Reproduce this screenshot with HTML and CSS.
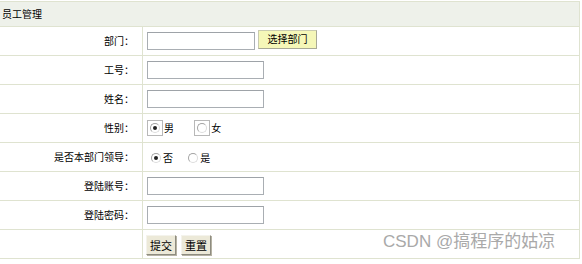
FILE: index.html
```html
<!DOCTYPE html>
<html lang="zh-CN">
<head>
<meta charset="utf-8">
<title>员工管理</title>
<link rel="stylesheet" href="styles.css">
</head>
<body>
<table class="form-table">
  <tr><td class="head" colspan="2">员工管理</td></tr>
  <tr>
    <td class="label">部门：</td>
    <td class="field"><input class="text short" type="text"><button class="pick" type="button">选择部门</button></td>
  </tr>
  <tr>
    <td class="label">工号：</td>
    <td class="field"><input class="text" type="text"></td>
  </tr>
  <tr>
    <td class="label">姓名：</td>
    <td class="field"><input class="text" type="text"></td>
  </tr>
  <tr>
    <td class="label">性别：</td>
    <td class="field">
      <span class="boxed"><input class="radio" type="radio" name="sex" checked></span><span class="opt">男</span>
      <span class="boxed second"><input class="radio" type="radio" name="sex"></span><span class="opt">女</span>
    </td>
  </tr>
  <tr>
    <td class="label">是否本部门领导：</td>
    <td class="field">
      <span class="plain"><input class="radio" type="radio" name="lead" checked><span class="opt">否</span></span>
      <span class="plain second2"><input class="radio" type="radio" name="lead"><span class="opt">是</span></span>
    </td>
  </tr>
  <tr>
    <td class="label">登陆账号：</td>
    <td class="field"><input class="text" type="text"></td>
  </tr>
  <tr>
    <td class="label">登陆密码：</td>
    <td class="field"><input class="text" type="password"></td>
  </tr>
  <tr>
    <td class="label"></td>
    <td class="field"><button class="act" type="button">提交</button><button class="act" type="button">重置</button></td>
  </tr>
</table>
<div class="watermark">CSDN @搞程序的姑凉</div>
</body>
</html>
```
FILE: styles.css
```css
html, body {
  margin: 0;
  padding: 0;
  background: #ffffff;
}
body {
  font-family: "Noto Sans CJK SC", "Liberation Sans", sans-serif;
  font-size: 10px;
  color: #000;
  position: relative;
  width: 582px;
  height: 264px;
  overflow: hidden;
}
.form-table {
  margin: 1px 0 0 -1px;
  width: 581px;
  border-collapse: separate;
  border-spacing: 1px;
  background: #dfe3d0;
}
.form-table td {
  background: #fff;
  height: 28px;
  padding: 0;
  vertical-align: middle;
  line-height: 12px;
}
.form-table td.head {
  height: 24px;
  background: #eef1ea;
  padding-left: 2px;
  text-align: left;
}
.label {
  width: 142px;
  text-align: right;
  padding-right: 8px !important;
  box-sizing: border-box;
}
.field {
  padding-left: 4px !important;
  white-space: nowrap;
}
.text {
  box-sizing: border-box;
  width: 117px;
  height: 18px;
  margin: 0;
  border: 1px solid #a9aeb3;
  border-top-color: #9ea3a8;
  background: #fff;
  vertical-align: middle;
  display: inline-block;
}
.text.short {
  width: 108px;
}
.pick {
  box-sizing: border-box;
  margin: 0 0 0 3px;
  width: 59px;
  height: 19px;
  padding: 0;
  font: inherit;
  font-size: 10px;
  color: #000;
  background: #f5f7b8;
  border: 1px solid #c9cbb0;
  border-right-color: #a8a996;
  border-bottom-color: #a8a996;
  vertical-align: middle;
  position: relative;
  top: -2px;
}
.act {
  box-sizing: border-box;
  height: 20px;
  margin: 0 5px 0 0;
  padding: 0 3px;
  font: inherit;
  font-size: 11px;
  line-height: 16px;
  color: #000;
  white-space: nowrap;
  background: #ece9d8;
  border: 1px solid;
  border-color: #f4f3ec #8e8c80 #8e8c80 #f4f3ec;
  box-shadow: 1px 1px 0 #b5b2a3;
  vertical-align: middle;
  position: relative;
  top: 1px;
}
.act:first-child {
  margin-left: -1px;
}
.radio {
  appearance: none;
  -webkit-appearance: none;
  box-sizing: border-box;
  width: 10px;
  height: 10px;
  margin: 0;
  border-radius: 50%;
  border: 1px solid #a4a4a4;
  border-right-color: #dcdcdc;
  border-bottom-color: #dcdcdc;
  background: #fff;
  position: relative;
  vertical-align: middle;
  display: inline-block;
}
.radio:checked::after {
  content: "";
  position: absolute;
  left: 2px;
  top: 2px;
  width: 4px;
  height: 4px;
  border-radius: 50%;
  background: #222;
}
.boxed {
  box-sizing: border-box;
  display: inline-flex;
  align-items: center;
  justify-content: flex-start;
  width: 16px;
  height: 16px;
  padding-left: 2px;
  border: 1px solid #b8b8b8;
  vertical-align: middle;
}
.boxed.second {
  margin-left: 18px;
}
.opt {
  display: inline-block;
  vertical-align: middle;
  margin-left: 1px;
}
.plain {
  display: inline-flex;
  align-items: center;
  vertical-align: middle;
  margin-left: 4px;
}
.plain .opt {
  margin-left: 2px;
}
.plain.second2 {
  margin-left: 13px;
}
.watermark {
  position: absolute;
  left: 383px;
  top: 232px;
  font-family: "Liberation Sans", "Noto Sans CJK SC", sans-serif;
  font-size: 17px;
  line-height: 20px;
  color: #a9a9a9;
  white-space: nowrap;
}
```
